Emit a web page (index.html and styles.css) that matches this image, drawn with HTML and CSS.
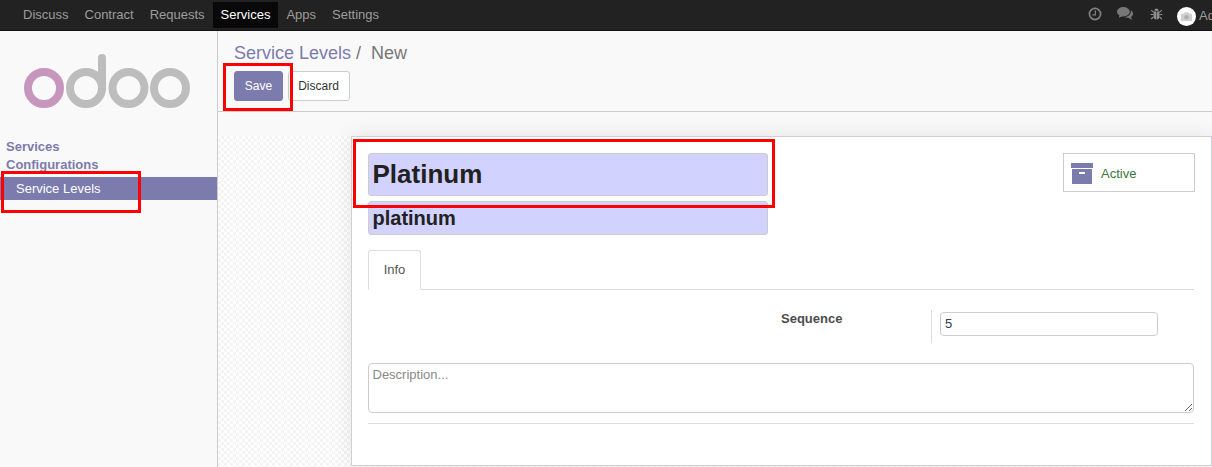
FILE: index.html
```html
<!DOCTYPE html>
<html lang="en">
<head>
<meta charset="utf-8">
<title>Service Levels</title>
<link rel="stylesheet" href="styles.css">
</head>
<body>
<header class="topbar">
  <nav class="topnav">
    <a class="navitem">Discuss</a>
    <a class="navitem">Contract</a>
    <a class="navitem">Requests</a>
    <a class="navitem active">Services</a>
    <a class="navitem">Apps</a>
    <a class="navitem">Settings</a>
  </nav>
  <div class="systray">
    <svg class="tray-icon clock" viewBox="0 0 14 14"><circle cx="7" cy="7" r="5.6" fill="none" stroke="#808080" stroke-width="1.7"/><path d="M7.4 3.4V7.8H4.4" fill="none" stroke="#808080" stroke-width="1.2"/></svg>
    <svg class="tray-icon chat" viewBox="0 0 16 13"><ellipse cx="6.4" cy="4.7" rx="6.4" ry="4.7" fill="#777"/><path d="M2.5 8L1.8 10.8L6 9Z" fill="#777"/><path d="M13.8 3.2C15.2 4.1 16 5.4 16 6.8C16 8.2 15.2 9.4 14 10.1L15 13L11.4 10.8C9.8 10.9 8.3 10.6 7.2 10C11 10 14.4 7.2 13.8 3.2Z" fill="#777"/></svg>
    <svg class="tray-icon bug" viewBox="0 0 14 14"><path d="M4.6 3.4C4.8 1.9 5.8 1 7 1C8.2 1 9.2 1.9 9.4 3.4Z" fill="#8f8f8f"/><path d="M3.8 4.2H6.7V13C4.9 12.8 3.8 11.6 3.8 9.8ZM7.3 4.2H10.2V9.8C10.2 11.6 9.1 12.8 7.3 13Z" fill="#8f8f8f"/><path d="M1.2 2.8L3.8 5M12.8 2.8L10.2 5M.6 7.6H3.8M13.4 7.6H10.2M1.2 12.4L3.8 10.2M12.8 12.4L10.2 10.2" stroke="#8f8f8f" stroke-width="1.2" fill="none"/></svg>
    <span class="avatar"><svg viewBox="0 0 10 8" class="avatar-cam"><path d="M0 1.4H2.6L3.4 .2H6.6L7.4 1.4H10V8H0Z" fill="#cfcfcf"/><circle cx="5" cy="4.6" r="2" fill="#b0b0b0"/></svg></span>
    <span class="username">Administrator</span>
  </div>
</header>

<div class="app">
  <aside class="sidebar">
    <svg class="logo" viewBox="0 0 166 54">
      <g fill="none" stroke="#bcbdbc" stroke-width="8">
        <circle cx="62" cy="34" r="16"/>
        <path d="M78 34V4" stroke-linecap="round"/>
        <circle cx="104.5" cy="34" r="16"/>
        <circle cx="146" cy="34" r="16"/>
      </g>
      <circle cx="20" cy="34" r="16" fill="none" stroke="#c796bd" stroke-width="8"/>
    </svg>
    <div class="menu-head first">Services</div>
    <div class="menu-head">Configurations</div>
    <div class="menu-link">Service Levels</div>
  </aside>

  <main class="main">
    <div class="panel">
      <div class="crumbs"><a class="crumb-link">Service Levels</a><span class="crumb-sep">/</span><span class="crumb-now">New</span></div>
      <div class="actions">
        <button class="btn primary">Save</button>
        <button class="btn plain">Discard</button>
      </div>
    </div>
    <div class="canvas">
      <form class="sheet">
        <div class="head-row">
          <div class="names">
            <input class="field name" value="Platinum">
            <input class="field code" value="platinum">
          </div>
          <div class="stat">
            <svg class="stat-icon" viewBox="0 0 22 21"><rect width="22" height="5" fill="#7c7bad"/><path d="M1 6H21V21H1Z" fill="#7c7bad"/><rect x="8" y="9" width="6" height="2" fill="#fff"/></svg>
            <span class="stat-text">Active</span>
          </div>
        </div>
        <div class="tabs"><div class="tab">Info</div></div>
        <div class="group">
          <label class="group-label">Sequence</label>
          <div class="group-value"><input class="seq" value="5"></div>
        </div>
        <textarea class="desc" placeholder="Description..."></textarea>
        <div class="rule"></div>
      </form>
    </div>
  </main>
</div>

<div class="mark mark-save"></div>
<div class="mark mark-name"></div>
<div class="mark mark-link"></div>
</body>
</html>
```

FILE: styles.css
```css
* { box-sizing: border-box; }
html, body { margin: 0; height: 467px; overflow: hidden; }
body { font-family: "Liberation Sans", Arial, sans-serif; font-size: 13px; color: #4c4c4c; background: #fff; position: relative; }

.topbar { height: 31px; background: #222; border-bottom: 1px solid #111; display: flex; justify-content: space-between; }
.topnav { display: flex; padding: 2px 0 0 15px; }
.navitem { height: 26px; line-height: 26px; padding: 0 8px; color: #9d9d9d; }
.navitem.active { background: #080808; color: #fff; }
.systray { width: 124px; display: flex; align-items: center; overflow: hidden; white-space: nowrap; color: #9d9d9d; }
.tray-icon { flex: none; display: block; margin-top: -3px; }
.clock { width: 14px; height: 14px; margin-right: 15px; }
.chat { width: 16px; height: 13px; margin-right: 17px; }
.bug { width: 13px; height: 14px; margin-right: 14px; }
.avatar { flex: none; width: 19px; height: 19px; margin-top: 2px; border-radius: 50%; background: #fff; display: flex; align-items: center; justify-content: center; margin-right: 3px; }
.avatar-cam { width: 11px; height: 9px; }

.app { display: flex; height: 436px; }
.sidebar { flex: none; width: 218px; background: #f9f9f9; border-right: 1px solid #ccc; }
.logo { display: block; width: 166px; height: 54px; margin: 23px 0 0 24px; }
.menu-head { padding-left: 6px; height: 18px; line-height: 18px; font-weight: bold; color: #7c7bad; }
.menu-head.first { margin-top: 30px; }
.menu-link { height: 23px; line-height: 23px; padding-left: 16px; margin-top: 3px; background: #7c7bad; color: #fff; }

.main { flex: 1; min-width: 0; display: flex; flex-direction: column; }
.panel { height: 81px; background: #f9f9f9; border-bottom: 1px solid #ccc; padding: 11px 0 0 16px; }
.crumbs { font-size: 18px; line-height: 22px; height: 29px; color: #777; }
.crumb-link { color: #7c7bad; }
.crumb-sep { margin: 0 10px 0 5px; color: #777; }
.actions { display: flex; gap: 5px; }
.btn { font: 12px "Liberation Sans", Arial, sans-serif; height: 30px; border-radius: 3px; padding: 0; }
.primary { width: 49px; background: #7c7bad; border: 1px solid #7c7bad; color: #fff; }
.plain { width: 62px; background: #fff; border: 1px solid #ccc; color: #333; padding-right: 1px; }

.canvas { flex: 1; min-height: 0; padding: 24px 0 0 133px; background-color: #fff;
  background-image: conic-gradient(#f4f4f4 25%, #fff 0 50%, #f4f4f4 0 75%, #fff 0); background-size: 6px 6px;
  box-shadow: inset 0 24px 0 #f9f9f9; }
.sheet { width: 861px; height: 330px; background: #fff; border: 1px solid #cfcfd8; padding: 16px 16px 0 16px; box-shadow: 0 0 20px rgba(0,0,0,.09); }

.head-row { display: flex; justify-content: space-between; align-items: flex-start; }
.names { width: 400px; display: flex; flex-direction: column; gap: 5px; }
.field { display: block; width: 100%; background: #d2d2ff; border: 1px solid #ccc; border-radius: 3px; color: #212121; font-family: inherit; font-weight: bold; padding: 0 3.5px; outline: none; }
.name { height: 43px; font-size: 26px; }
.code { height: 34px; font-size: 20px; }
.stat { width: 132px; height: 39px; border: 1px solid #ccc; display: flex; align-items: center; padding: 2px 0 0 7px; }
.stat-icon { width: 22px; height: 21px; margin-right: 8px; }
.stat-text { color: #3c763d; }

.tabs { margin-top: 15px; width: 826px; height: 40px; border-bottom: 1px solid #ddd; }
.tab { width: 53px; height: 40px; line-height: 38px; text-align: center; background: #fff; border: 1px solid #ddd; border-bottom-color: #fff; border-radius: 3px 3px 0 0; color: #555; }

.group { display: flex; margin-top: 20px; height: 33px; }
.group-label { width: 563px; padding-left: 413px; font-weight: bold; line-height: 18px; }
.group-value { border-left: 1px solid #ddd; padding: 2px 0 0 8px; }
.seq { display: block; width: 218px; height: 24px; border: 1px solid #ccc; border-radius: 4px; padding: 0 4px 2px; font: 13px "Liberation Sans", Arial, sans-serif; color: #2c3e50; outline: none; }

.desc { display: block; width: 826px; height: 50px; margin-top: 20px; border: 1px solid #ccc; border-radius: 4px; padding: 3px 3.5px; font: 13px "Liberation Sans", Arial, sans-serif; outline: none; }
.desc::placeholder { color: #888; }
.rule { margin-top: 10px; height: 1px; width: 826px; background: #ddd; }

.mark { position: absolute; border: 3px solid #f00; }
.mark-save { left: 223px; top: 63px; width: 70px; height: 48px; }
.mark-name { left: 353px; top: 139px; width: 422px; height: 69px; }
.mark-link { left: 1px; top: 171px; width: 140px; height: 42px; }
```
